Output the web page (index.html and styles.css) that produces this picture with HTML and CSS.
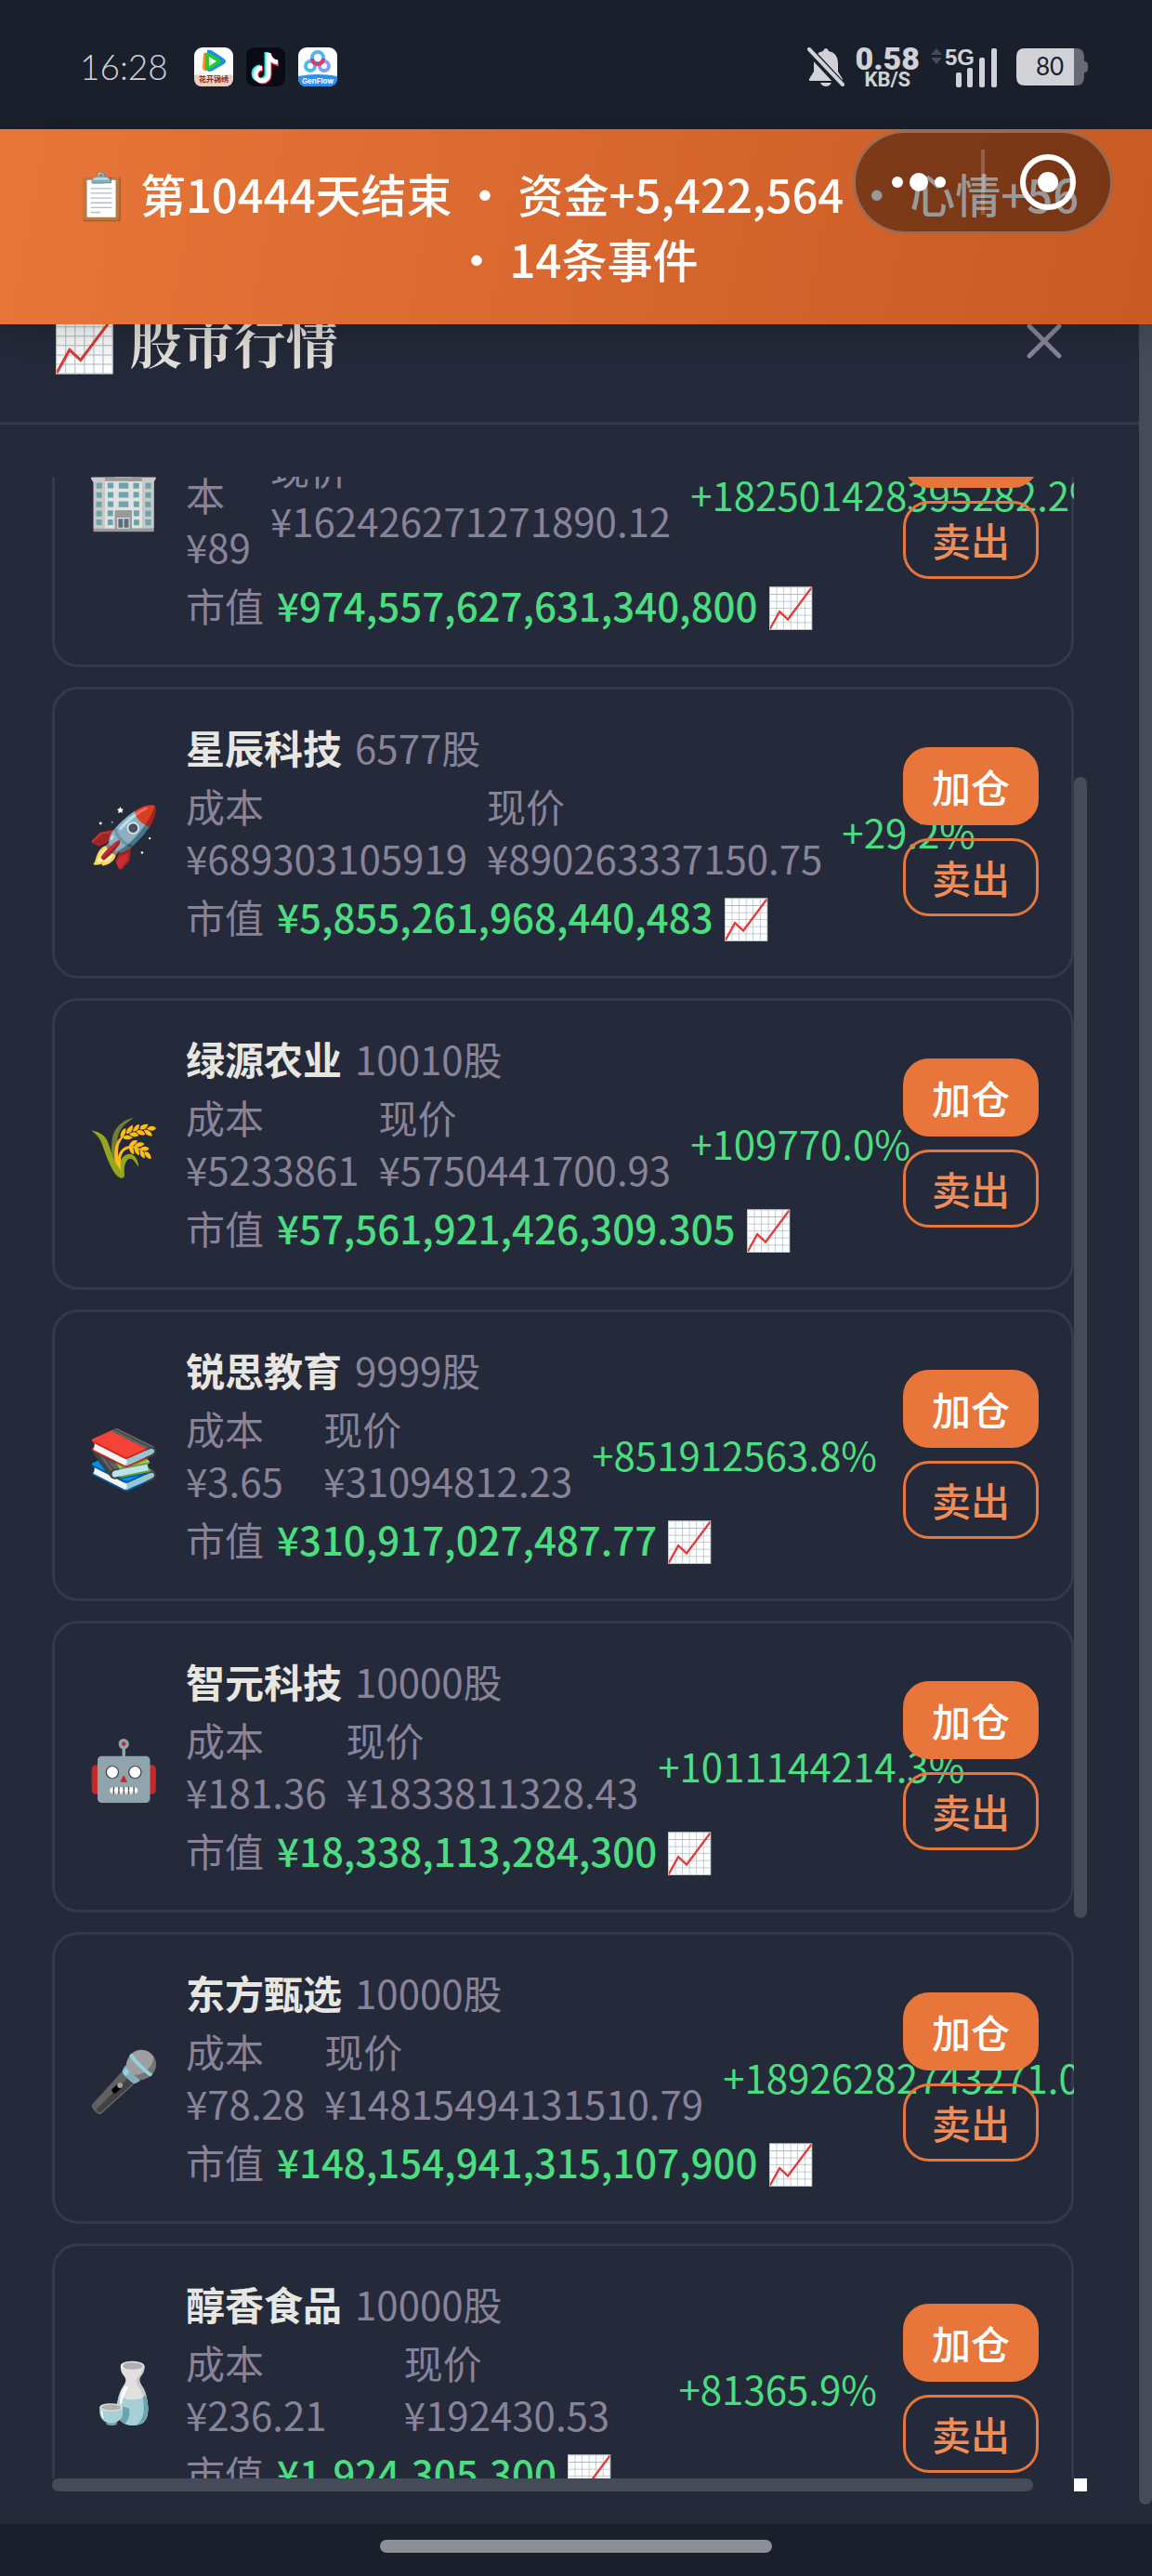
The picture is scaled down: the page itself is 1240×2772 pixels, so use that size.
FILE: index.html
```html
<!DOCTYPE html>
<html lang="zh-CN">
<head>
<meta charset="utf-8">
<meta name="viewport" content="width=device-width, initial-scale=1">
<title>股市行情</title>
<link rel="stylesheet" href="styles.css">
</head>
<body>
<header class="status">
  <div class="status-side">
    <time class="clock">16:28</time>
    <div class="apps">
      <svg class="app" viewBox="0 0 42 42" aria-hidden="true">
        <rect width="42" height="42" rx="9" fill="#fff"/>
        <path d="M0 30q6-2 10 2l22 0q5-4 10-2v3q0 9-9 9H9q-9 0-9-9z" fill="#e9cdbf"/>
        <path d="M10 7q1-2 4-1v19q-4 1-5-3z" fill="#ff8a1e"/>
        <path d="M14 3q3-1 6 1l12 8q4 3 0 6l-12 7q-4 2-6 0z" fill="#1a8df0"/>
        <path d="M12 6q3-1 6 1l9 5q3 3 0 5l-9 6q-3 2-6 1z" fill="#22cc2a"/>
        <path d="M16 10l8 5-8 5z" fill="#fff"/>
        <text x="21" y="37" text-anchor="middle" class="app-caption-red">花开锦绣</text>
      </svg>
      <svg class="app" viewBox="0 0 42 42" aria-hidden="true">
        <rect width="42" height="42" rx="9" fill="#0a0a14"/>
        <g fill="none" stroke-width="5">
          <path d="M22 5v23a7 7 0 1 1-7-7M22 7q2 8 11 9" stroke="#25e8e4"/>
          <path d="M25 7v23a7 7 0 1 1-7-7M25 9q2 8 10 9" stroke="#fb2a55"/>
          <path d="M24 6v23a7 7 0 1 1-7-7M24 7q2 8 10 9" stroke="#fff"/>
        </g>
      </svg>
      <svg class="app" viewBox="0 0 42 42" aria-hidden="true">
        <rect width="42" height="42" rx="9" fill="#fff"/>
        <path d="M0 31q21-4 42 0v2q0 9-9 9H9q-9 0-9-9z" fill="#2f8ff0"/>
        <g fill="none" stroke-width="4">
          <circle cx="13" cy="20" r="5" stroke="#4db9ee"/>
          <circle cx="28" cy="20" r="5" stroke="#7da4f4"/>
          <circle cx="21" cy="11" r="6" stroke="#55b4f3"/>
          <path d="M15 12a6 6 0 0 0 12 0" stroke="#e8306e"/>
        </g>
        <text x="21" y="39" text-anchor="middle" class="app-caption">GenFlow</text>
      </svg>
    </div>
  </div>
  <div class="status-side status-right">
    <svg class="bell" viewBox="0 0 40 42" aria-hidden="true">
      <path d="M20 1q2 0 3 3q10 2 10 13v9l5 8v2H2v-2l5-8v-9Q7 6 17 4q1-3 3-3z" fill="#d0d2d8"/>
      <path d="M14 38h12q-2 4-6 4t-6-4z" fill="#d0d2d8"/>
      <path d="M-2-1L38 42" stroke="#1a1f2c" stroke-width="9"/>
      <path d="M2 2L38 40" stroke="#d0d2d8" stroke-width="4" stroke-linecap="round"/>
    </svg>
    <div class="speed"><b>0.58</b><span>KB/S</span></div>
    <svg class="signal" viewBox="0 0 72 43" role="img" aria-label="5G">
      <path d="M0 8l6-7 6 7zM0 11l6 7 6-7z" fill="#454a56"/>
      <text x="15" y="19" class="signal-text">5G</text>
      <g fill="#d0d2d8"><rect x="27" y="27" width="6" height="16" rx="2"/><rect x="39" y="22" width="6" height="21" rx="2"/><rect x="52" y="11" width="6" height="32" rx="2"/><rect x="65" y="1" width="6" height="42" rx="2"/></g>
    </svg>
    <svg class="battery" viewBox="0 0 77 40" role="img" aria-label="80">
      <path d="M62 0h2q9 0 9 9v5q4 0 4 4v4q0 4-4 4v5q0 9-9 9h-2z" fill="#666a75"/>
      <path d="M9 0h53v40H9q-9 0-9-9V9q0-9 9-9z" fill="#d0d2d8"/>
      <text x="36" y="29" text-anchor="middle" class="battery-text">80</text>
    </svg>
  </div>
</header>

<main class="stage">
  <div class="toast" role="status">📋 第10444天结束 • 资金+5,422,564 • 心情+56 • 14条事件</div>
  <div class="capsule">
    <button class="capsule-btn" type="button" aria-label="更多">
      <svg viewBox="0 0 60 24" width="60" height="24"><g fill="#fff"><circle cx="7" cy="12" r="6"/><circle cx="30" cy="12" r="10"/><circle cx="53" cy="12" r="6"/></g></svg>
    </button>
    <span class="capsule-line"></span>
    <button class="capsule-btn" type="button" aria-label="关闭小程序">
      <svg viewBox="0 0 62 62" width="62" height="62"><circle cx="31" cy="31" r="27" fill="none" stroke="#fff" stroke-width="6"/><circle cx="31" cy="31" r="11" fill="#fff"/></svg>
    </button>
  </div>

  <section class="panel">
    <div class="panel-main">
      <div class="panel-head">
        <h1 class="panel-title">📈 股市行情</h1>
        <button class="close" type="button" aria-label="关闭">
          <svg viewBox="0 0 40 40" width="40" height="40"><path d="M4 4l32 32M36 4L4 36" stroke="#8a859c" stroke-width="5" stroke-linecap="round"/></svg>
        </button>
      </div>
      <div class="scroller">
        <div class="viewport">
          <ul class="list">
            <li class="card">
              <span class="icon">🏢</span>
              <div class="info">
                <div class="row"><strong class="name">星城地产</strong><span>6000股</span></div>
                <div class="prices"><span>成本 ¥89</span><span>现价 ¥162426271271890.12</span><span class="gain">+182501428395282.2%</span></div>
                <div class="row"><span>市值</span><span class="value">¥974,557,627,631,340,800 📈</span></div>
              </div>
              <div class="actions"><button class="btn buy" type="button">加仓</button><button class="btn sell" type="button">卖出</button></div>
            </li>
            <li class="card">
              <span class="icon">🚀</span>
              <div class="info">
                <div class="row"><strong class="name">星辰科技</strong><span>6577股</span></div>
                <div class="prices"><span>成本 ¥689303105919</span><span>现价 ¥890263337150.75</span><span class="gain">+29.2%</span></div>
                <div class="row"><span>市值</span><span class="value">¥5,855,261,968,440,483 📈</span></div>
              </div>
              <div class="actions"><button class="btn buy" type="button">加仓</button><button class="btn sell" type="button">卖出</button></div>
            </li>
            <li class="card">
              <span class="icon">🌾</span>
              <div class="info">
                <div class="row"><strong class="name">绿源农业</strong><span>10010股</span></div>
                <div class="prices"><span>成本 ¥5233861</span><span>现价 ¥5750441700.93</span><span class="gain">+109770.0%</span></div>
                <div class="row"><span>市值</span><span class="value">¥57,561,921,426,309.305 📈</span></div>
              </div>
              <div class="actions"><button class="btn buy" type="button">加仓</button><button class="btn sell" type="button">卖出</button></div>
            </li>
            <li class="card">
              <span class="icon">📚</span>
              <div class="info">
                <div class="row"><strong class="name">锐思教育</strong><span>9999股</span></div>
                <div class="prices"><span>成本 ¥3.65</span><span>现价 ¥31094812.23</span><span class="gain">+851912563.8%</span></div>
                <div class="row"><span>市值</span><span class="value">¥310,917,027,487.77 📈</span></div>
              </div>
              <div class="actions"><button class="btn buy" type="button">加仓</button><button class="btn sell" type="button">卖出</button></div>
            </li>
            <li class="card">
              <span class="icon">🤖</span>
              <div class="info">
                <div class="row"><strong class="name">智元科技</strong><span>10000股</span></div>
                <div class="prices"><span>成本 ¥181.36</span><span>现价 ¥1833811328.43</span><span class="gain">+1011144214.3%</span></div>
                <div class="row"><span>市值</span><span class="value">¥18,338,113,284,300 📈</span></div>
              </div>
              <div class="actions"><button class="btn buy" type="button">加仓</button><button class="btn sell" type="button">卖出</button></div>
            </li>
            <li class="card">
              <span class="icon">🎤</span>
              <div class="info">
                <div class="row"><strong class="name">东方甄选</strong><span>10000股</span></div>
                <div class="prices"><span>成本 ¥78.28</span><span>现价 ¥14815494131510.79</span><span class="gain">+18926282743271.0%</span></div>
                <div class="row"><span>市值</span><span class="value">¥148,154,941,315,107,900 📈</span></div>
              </div>
              <div class="actions"><button class="btn buy" type="button">加仓</button><button class="btn sell" type="button">卖出</button></div>
            </li>
            <li class="card">
              <span class="icon">🍶</span>
              <div class="info">
                <div class="row"><strong class="name">醇香食品</strong><span>10000股</span></div>
                <div class="prices"><span>成本 ¥236.21</span><span>现价 ¥192430.53</span><span class="gain">+81365.9%</span></div>
                <div class="row"><span>市值</span><span class="value">¥1,924,305,300 📈</span></div>
              </div>
              <div class="actions"><button class="btn buy" type="button">加仓</button><button class="btn sell" type="button">卖出</button></div>
            </li>
          </ul>
        </div>
        <div class="track-y"><div class="thumb-y"></div></div>
        <div class="track-x"><div class="thumb-x"></div></div>
        <div class="corner"></div>
      </div>
    </div>
    <div class="page-thumb"></div>
  </section>
</main>
<footer class="home"><div class="home-pill"></div></footer>
</body>
</html>
```
FILE: styles.css
```css
* { box-sizing: border-box; }

body {
  margin: 0;
  height: 100vh;
  display: flex;
  flex-direction: column;
  overflow: hidden;
  background: #1a1f2c;
  color: #888399;
  font: 42px/56px "Noto Sans CJK SC", "Noto Color Emoji", sans-serif;
}

button {
  margin: 0;
  padding: 0;
  border: 0;
  background: none;
  font: inherit;
  color: inherit;
}

/* system status bar */
.status {
  display: flex;
  justify-content: space-between;
  align-items: center;
  padding: 48px 69px 43px 86px;
  flex: none;
}
.status-side { display: flex; align-items: center; gap: 28px; }
.clock {
  font: 300 37px/48px Lato, sans-serif;
  color: #d0d2d8;
}
.apps { display: flex; gap: 14px; }
.app { width: 42px; height: 42px; }
.app-caption { font: 700 8px Inter, sans-serif; fill: #fff; }
.app-caption-red { font: 700 8px "Noto Sans CJK SC", sans-serif; fill: #8c2b22; }
.status-right { gap: 12px; color: #d0d2d8; }
.bell { width: 40px; height: 42px; }
.speed {
  display: flex;
  flex-direction: column;
  align-items: center;
  font: 700 22px/18px Roboto, sans-serif;
}
.speed b { font-size: 34px; line-height: 28px; }
.signal { width: 72px; height: 43px; }
.signal-text { font: 700 24px "Liberation Sans", sans-serif; fill: #d0d2d8; }
.battery { width: 77px; height: 40px; margin-left: 8px; }
.battery-text { font: 400 26px Lato, sans-serif; fill: #1a1f2c; }

/* stage holds the panel and what floats over it */
.stage {
  position: relative;
  flex: 1;
  min-height: 0;
  display: flex;
  flex-direction: column;
  background: #252a3b;
}
.toast {
  position: absolute;
  inset: 0 0 auto;
  z-index: 1;
  padding: 34px 56px 36px;
  background: linear-gradient(100deg, #e8763a, #c85a24);
  box-shadow: 0 14px 42px rgba(0, 0, 0, 0.2);
  color: #fff;
  font-size: 49px;
  font-weight: 500;
  line-height: 70px;
  text-align: center;
}
.capsule {
  position: absolute;
  top: 1px;
  right: 42px;
  z-index: 2;
  width: 280px;
  height: 112px;
  display: flex;
  align-items: center;
  border: 3px solid rgba(255, 255, 255, 0.25);
  border-radius: 56px;
  background: rgba(0, 0, 0, 0.4);
}
.capsule-btn { flex: 1; display: grid; place-items: center; }
.capsule-line { width: 4px; height: 70px; background: rgba(255, 255, 255, 0.2); }

/* market panel */
.panel {
  flex: 1;
  min-height: 0;
  margin-top: 147px;
  display: flex;
}
.panel-main {
  flex: 1;
  min-width: 0;
  display: flex;
  flex-direction: column;
}
.page-thumb {
  width: 14px;
  margin-bottom: 21px;
  border-radius: 0 0 7px 7px;
  background: #464b5a;
}
.panel-head {
  display: flex;
  justify-content: space-between;
  align-items: center;
  padding: 39px 82px 45px 56px;
  border-bottom: 3px solid #353a4b;
}
.panel-title {
  margin: 0;
  color: #e5e2dc;
  font: 700 56px/84px "Noto Serif CJK SC", "Noto Serif SC", "Noto Sans CJK SC", "Noto Color Emoji", serif;
}
.close { width: 40px; height: 40px; display: grid; }
.scroller {
  flex: 1;
  min-height: 0;
  margin: 56px 56px 35px;
  display: grid;
  grid-template: minmax(0, 1fr) 14px / minmax(0, 1fr) 14px;
}
.viewport { overflow: hidden; }
.track-y { display: grid; grid-template-rows: 15fr 57fr 28fr; }
.thumb-y {
  grid-row: 2;
  border-radius: 7px;
  background: #464b5a;
}
.thumb-x {
  width: 96%;
  height: 14px;
  border-radius: 7px;
  background: #464b5a;
}
.corner { background: #fff; }

/* the list is shown scrolled part of the way down */
.list {
  list-style: none;
  margin: -165px 0 0;
  padding: 0;
  display: flex;
  flex-direction: column;
  gap: 21px;
}
.card {
  display: flex;
  align-items: center;
  gap: 28px;
  padding: 34px 35px 36px;
  border: 3px solid #353a4b;
  border-radius: 28px;
}
.icon { flex: none; width: 78px; font-size: 63px; line-height: 84px; }
.info {
  flex: 1;
  min-width: 0;
  display: flex;
  flex-direction: column;
  gap: 7px;
}
.row { display: flex; gap: 14px; white-space: nowrap; }
.name { color: #e8e6e1; font-weight: 700; }
.prices { display: flex; align-items: center; gap: 21px; }
.value { color: #4ade80; font-weight: 500; }
.gain { color: #4ade80; }
.actions { display: flex; flex-direction: column; gap: 14px; }
.btn {
  padding: 11px 28px;
  border: 3px solid #e8763a;
  border-radius: 28px;
  font-weight: 500;
  white-space: nowrap;
}
.buy { background: #e8763a; color: #fff; }
.sell { color: #f08c55; }

/* gesture bar */
.home {
  flex: none;
  height: 56px;
  display: flex;
  justify-content: center;
  padding-top: 17px;
}
.home-pill {
  width: 34%;
  height: 14px;
  border-radius: 7px;
  background: #8c8f96;
}
```
